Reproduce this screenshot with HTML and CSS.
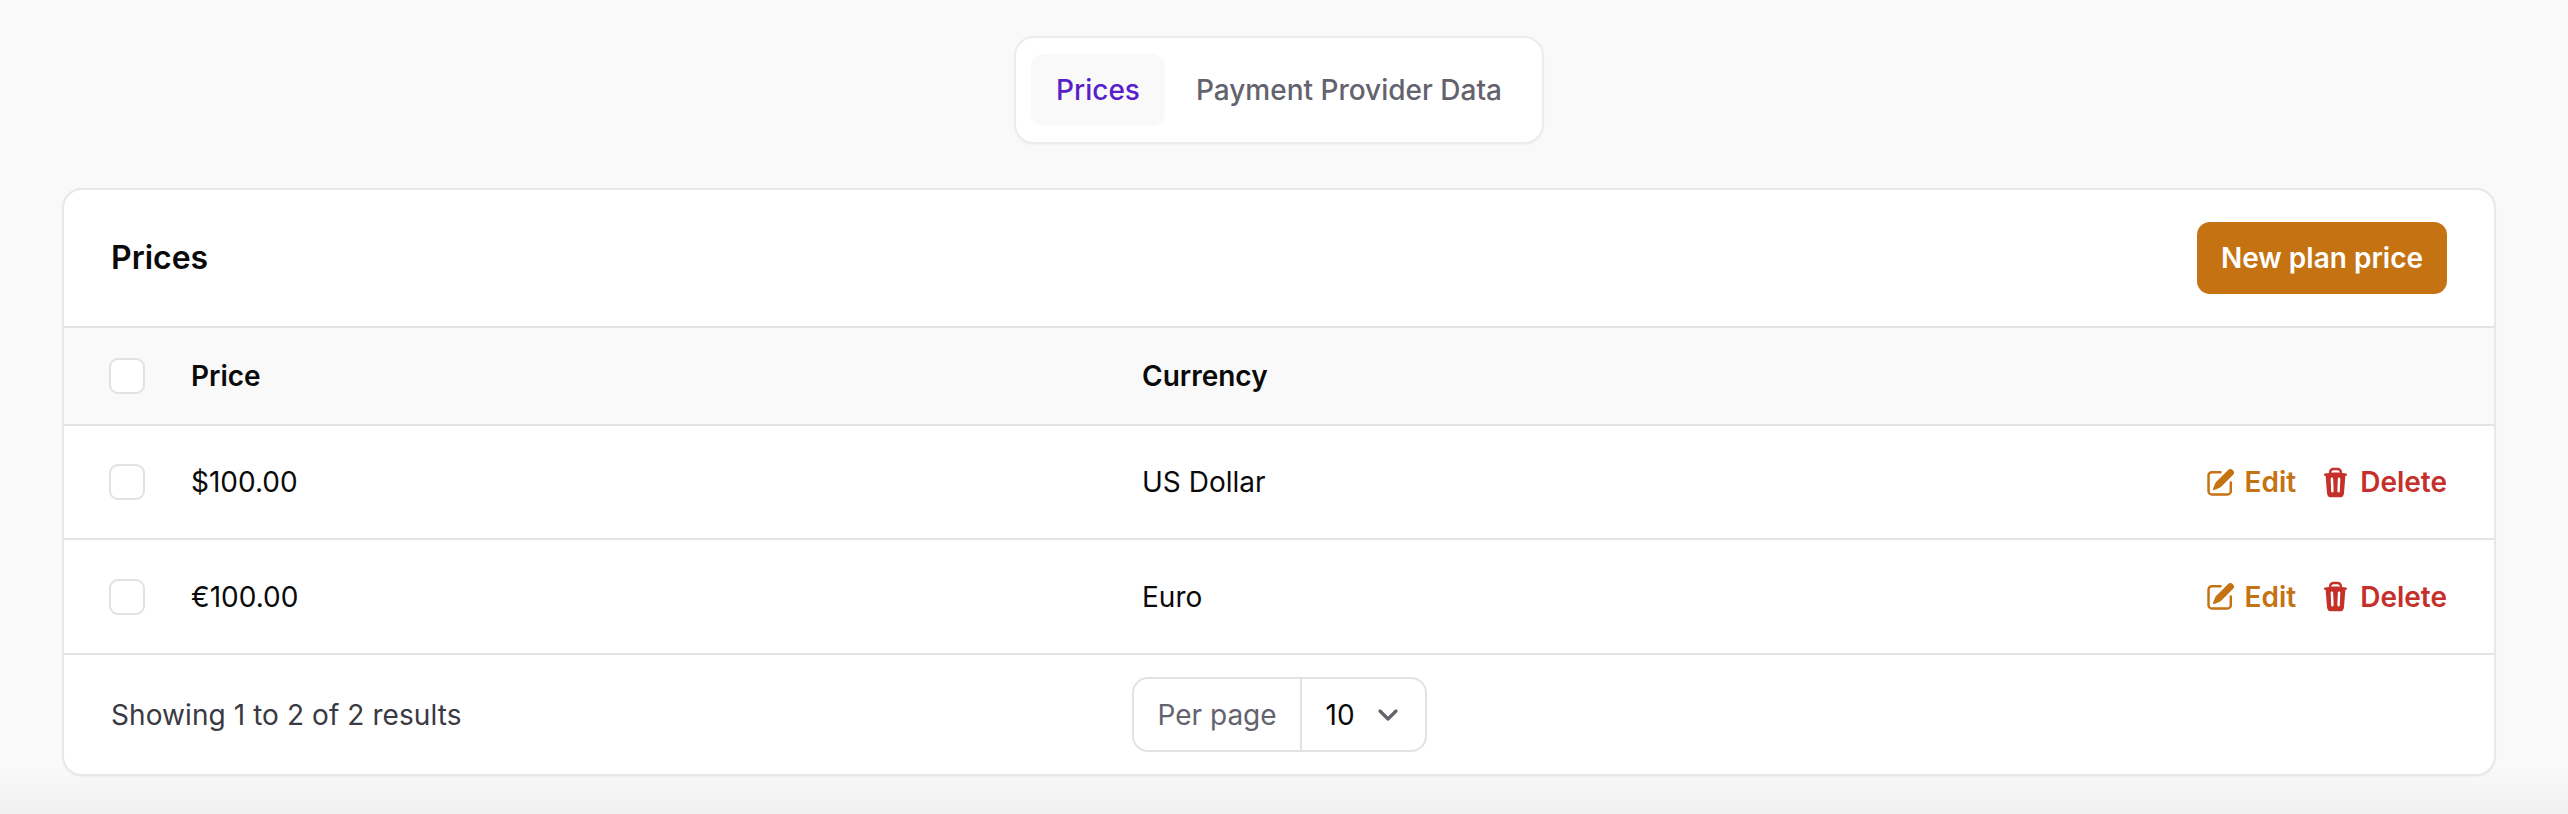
FILE: index.html
```html
<!DOCTYPE html>
<html lang="en">
<head>
<meta charset="utf-8">
<title>Prices</title>
<link rel="stylesheet" href="styles.css">
</head>
<body>
<main class="page">
  <nav class="tabs">
    <a class="tab tab-active">Prices</a>
    <a class="tab">Payment Provider Data</a>
  </nav>
  <section class="card">
    <header class="card-head">
      <h2 class="card-title">Prices</h2>
      <button class="btn-primary">New plan price</button>
    </header>
    <table class="table">
      <thead>
        <tr>
          <th class="col-check"><span class="check"></span></th>
          <th class="col-price">Price</th>
          <th>Currency</th>
          <th></th>
        </tr>
      </thead>
      <tbody>
        <tr>
          <td class="col-check"><span class="check"></span></td>
          <td class="col-price">$100.00</td>
          <td>US Dollar</td>
          <td class="col-actions">
            <div class="actions">
              <a class="action action-edit"><svg class="icon" viewBox="0 0 20 20" fill="currentColor"><path d="M5.433 13.917l1.262-3.155A4 4 0 017.58 9.42l6.92-6.918a2.121 2.121 0 013 3l-6.92 6.918c-.383.383-.84.685-1.343.886l-3.154 1.262a.5.5 0 01-.65-.65z"/><path d="M3.5 5.75c0-.69.56-1.25 1.25-1.25H10A.75.75 0 0010 3H4.75A2.75 2.75 0 002 5.75v9.5A2.75 2.75 0 004.75 18h9.5A2.75 2.75 0 0017 15.25V10a.75.75 0 00-1.5 0v5.25c0 .69-.56 1.25-1.25 1.25h-9.5c-.69 0-1.25-.56-1.25-1.25v-9.5z"/></svg>Edit</a>
              <a class="action action-delete"><svg class="icon" viewBox="0 0 20 20" fill="currentColor"><path fill-rule="evenodd" clip-rule="evenodd" d="M8.75 1A2.75 2.75 0 006 3.75v.443c-.795.077-1.584.176-2.365.298a.75.75 0 10.23 1.482l.149-.022.841 10.518A2.75 2.75 0 007.596 19h4.807a2.75 2.75 0 002.742-2.53l.841-10.52.149.023a.75.75 0 00.23-1.482A41.03 41.03 0 0014 4.193V3.75A2.75 2.75 0 0011.25 1h-2.5zM10 4c.84 0 1.673.025 2.5.075V3.75c0-.69-.56-1.25-1.25-1.25h-2.5c-.69 0-1.25.56-1.25 1.25v.325C8.327 4.025 9.16 4 10 4zM8.58 7.72a.75.75 0 00-1.5.06l.3 7.5a.75.75 0 101.5-.06l-.3-7.5zm4.34.06a.75.75 0 10-1.5-.06l-.3 7.5a.75.75 0 101.5.06l.3-7.5z"/></svg>Delete</a>
            </div>
          </td>
        </tr>
        <tr>
          <td class="col-check"><span class="check"></span></td>
          <td class="col-price">€100.00</td>
          <td>Euro</td>
          <td class="col-actions">
            <div class="actions">
              <a class="action action-edit"><svg class="icon" viewBox="0 0 20 20" fill="currentColor"><path d="M5.433 13.917l1.262-3.155A4 4 0 017.58 9.42l6.92-6.918a2.121 2.121 0 013 3l-6.92 6.918c-.383.383-.84.685-1.343.886l-3.154 1.262a.5.5 0 01-.65-.65z"/><path d="M3.5 5.75c0-.69.56-1.25 1.25-1.25H10A.75.75 0 0010 3H4.75A2.75 2.75 0 002 5.75v9.5A2.75 2.75 0 004.75 18h9.5A2.75 2.75 0 0017 15.25V10a.75.75 0 00-1.5 0v5.25c0 .69-.56 1.25-1.25 1.25h-9.5c-.69 0-1.25-.56-1.25-1.25v-9.5z"/></svg>Edit</a>
              <a class="action action-delete"><svg class="icon" viewBox="0 0 20 20" fill="currentColor"><path fill-rule="evenodd" clip-rule="evenodd" d="M8.75 1A2.75 2.75 0 006 3.75v.443c-.795.077-1.584.176-2.365.298a.75.75 0 10.23 1.482l.149-.022.841 10.518A2.75 2.75 0 007.596 19h4.807a2.75 2.75 0 002.742-2.53l.841-10.52.149.023a.75.75 0 00.23-1.482A41.03 41.03 0 0014 4.193V3.75A2.75 2.75 0 0011.25 1h-2.5zM10 4c.84 0 1.673.025 2.5.075V3.75c0-.69-.56-1.25-1.25-1.25h-2.5c-.69 0-1.25.56-1.25 1.25v.325C8.327 4.025 9.16 4 10 4zM8.58 7.72a.75.75 0 00-1.5.06l.3 7.5a.75.75 0 101.5-.06l-.3-7.5zm4.34.06a.75.75 0 10-1.5-.06l-.3 7.5a.75.75 0 101.5.06l.3-7.5z"/></svg>Delete</a>
            </div>
          </td>
        </tr>
      </tbody>
    </table>
    <footer class="card-foot">
      <span class="results">Showing 1 to 2 of 2 results</span>
      <div class="per-page">
        <span class="per-page-label">Per page</span>
        <span class="per-page-value">10<svg class="chevron" viewBox="0 0 20 20" fill="none" stroke="currentColor" stroke-width="1.6" stroke-linecap="round" stroke-linejoin="round"><path d="M6 8l4 4 4-4"/></svg></span>
      </div>
    </footer>
  </section>
</main>
</body>
</html>
```
FILE: styles.css
```css
* { box-sizing: border-box; }
html, body { margin: 0; height: 100%; }
body {
  background: linear-gradient(to bottom, #f9f9f9 0, #f9f9f9 770px, #f0f0f0 814px);
  font-family: Inter, "Liberation Sans", sans-serif;
  font-size: 28px;
  line-height: 40px;
  color: #0a0a0a;
  overflow: hidden;
}
.page {
  display: flex;
  flex-direction: column;
  align-items: center;
  padding: 36px 72px 0 62px;
  gap: 44px;
}
.tabs {
  display: flex;
  gap: 6px;
  padding: 16px 15px;
  background: #fff;
  border: 2px solid #ececec;
  border-radius: 20px;
  box-shadow: 0 1px 2px rgba(0, 0, 0, .04);
}
.tab {
  padding: 16px 25px;
  height: 72px;
  border-radius: 13px;
  color: #63636e;
  font-weight: 500;
}
.tab-active {
  background: #f9f9f9;
  color: #5a1ec8;
}
.card {
  width: 100%;
  background: #fff;
  border: 2px solid #e8e8e8;
  border-radius: 20px;
  overflow: hidden;
  box-shadow: 0 1px 2px rgba(0, 0, 0, .04);
}
.card-head {
  display: flex;
  align-items: center;
  justify-content: space-between;
  height: 136px;
  padding: 0 47px;
}
.card-title {
  margin: 0;
  font-size: 32px;
  font-weight: 600;
}
.btn-primary {
  height: 72px;
  padding: 0 24px;
  background: #c47212;
  color: #fff;
  border: 0;
  border-radius: 13px;
  font: 600 28px Inter, "Liberation Sans", sans-serif;
}
.table {
  width: 100%;
  border-collapse: collapse;
  table-layout: fixed;
}
.table th, .table td {
  padding: 0;
  text-align: left;
  border-top: 2px solid #e4e4e4;
}
.table th {
  height: 98px;
  background: #f9f9f9;
  font-weight: 600;
}
.table td { height: 114px; }
.col-check { width: 127px; padding-left: 45px !important; }
.col-price { width: 951px; }
.check {
  display: block;
  width: 36px;
  height: 36px;
  background: #fff;
  border: 2px solid #e2e2e2;
  border-radius: 9px;
}
.col-actions { width: 400px; }
.actions {
  display: flex;
  justify-content: flex-end;
  gap: 23px;
  padding-right: 47px;
}
.action {
  display: flex;
  align-items: center;
  gap: 8px;
  font-weight: 600;
}
.action-edit { color: #c47212; }
.action-delete { color: #c5302b; }
.icon { width: 33px; height: 33px; }
.card-foot {
  display: grid;
  grid-template-columns: 1fr auto 1fr;
  align-items: center;
  height: 121px;
  padding: 0 47px;
  border-top: 2px solid #e4e4e4;
}
.results { color: #3a3a42; letter-spacing: .08px; }
.per-page {
  display: flex;
  align-items: stretch;
  height: 75px;
  width: 295px;
  border: 2px solid #e2e2e2;
  border-radius: 16px;
}
.per-page-label {
  display: flex;
  align-items: center;
  padding: 0 24px;
  border-right: 2px solid #e2e2e2;
  color: #63636e;
  width: 168px;
  white-space: nowrap;
}
.per-page-value {
  display: flex;
  align-items: center;
  gap: 13px;
  padding-left: 24px;
}
.chevron { width: 40px; height: 40px; color: #63636e; }
```
